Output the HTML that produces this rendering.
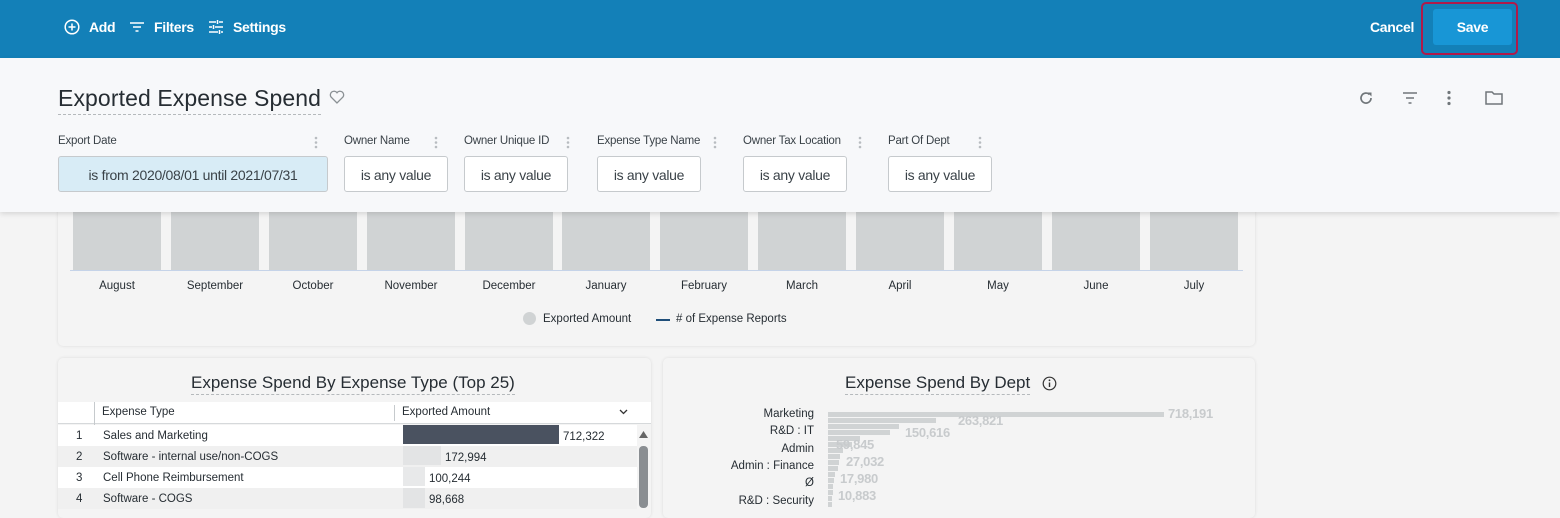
<!DOCTYPE html>
<html><head><style>
*{margin:0;padding:0;box-sizing:border-box}
body{width:1560px;height:508px;overflow:hidden;background:#f4f4f4;font-family:"Liberation Sans",sans-serif;position:relative;color:#262d33}
.abs{position:absolute}
.hdr{left:0;top:0;width:1560px;height:58px;background:#1380b8;color:#fff;font-weight:bold;font-size:14px;letter-spacing:-0.3px}
.panel{left:0;top:58px;width:1560px;height:154px;background:#f7f8fa;box-shadow:0 2px 5px rgba(0,0,0,.12);z-index:2}
.lbl{font-size:11.5px;color:#3a4248;letter-spacing:-0.2px}
.box{top:98px;height:36px;border:1px solid #c6cacd;border-radius:3px;background:#fff;font-size:14px;color:#3a4248;text-align:center;line-height:36px;letter-spacing:-0.3px}
.card{background:#f4f4f4;border-radius:5px;box-shadow:0 0 3px rgba(0,0,0,.1)}
.bar{top:212px;height:58px;background:#d0d3d4;width:88px}
.mon{top:280px;font-size:11.5px;width:98px;text-align:center}
.row{left:58px;width:579px;height:21px;font-size:11.5px;line-height:21px}
.dl{font-size:11.5px;width:150px;text-align:right;left:664px}
.db{left:828px;height:5px;background:#d0d3d4}
.dv{font-size:13px;color:#c8cbcd;font-weight:bold;letter-spacing:-0.3px}
</style></head><body>
<div class="abs hdr">
<svg class="abs" style="left:64px;top:19px" width="16" height="16" viewBox="0 0 16 16"><circle cx="8" cy="8" r="6.8" fill="none" stroke="#fff" stroke-width="1.5"/><path d="M8 4.5v7M4.5 8h7" stroke="#fff" stroke-width="1.5"/></svg>
<span class="abs" style="left:89px;top:19px">Add</span>
<svg class="abs" style="left:129px;top:20px" width="16" height="14" viewBox="0 0 16 14"><path d="M1 3h14M4 7h8M6.5 11h3" stroke="#fff" stroke-width="1.6"/></svg>
<span class="abs" style="left:154px;top:19px">Filters</span>
<svg class="abs" style="left:208px;top:19px" width="16" height="16" viewBox="0 0 16 16"><path d="M1 3h7M11 3h4M1 8h3M7 8h8M1 13h9M13 13h2M9.5 1v4M5.5 6v4M11.5 11v4" stroke="#fff" stroke-width="1.5"/></svg>
<span class="abs" style="left:233px;top:19px">Settings</span>
<span class="abs" style="left:1370px;top:19px">Cancel</span>
<div class="abs" style="left:1421px;top:2px;width:97px;height:53px;border:2px solid #b01a4a;border-radius:5px"></div>
<div class="abs" style="left:1433px;top:9px;width:79px;height:36px;background:#1896d6;border-radius:3px;text-align:center;line-height:36px">Save</div>
</div>
<div class="abs panel">
<div class="abs" style="left:58px;top:27px;font-size:23px;color:#262d33;border-bottom:1px dashed #b5b9bc;padding-bottom:2px;letter-spacing:0.1px">Exported Expense Spend</div>
<svg class="abs" style="left:329px;top:32px" width="16" height="14" viewBox="0 0 16 14"><path d="M8 13L2 7A3.3 3.3 0 0 1 8 2.8 3.3 3.3 0 0 1 14 7z" fill="none" stroke="#8a9094" stroke-width="1.3"/></svg>
<svg class="abs" style="left:1358px;top:32px" width="16" height="16" viewBox="0 0 16 16"><path d="M13 8A5 5 0 1 1 11.5 4.5" fill="none" stroke="#70767a" stroke-width="1.7"/><path d="M9.5 2.5h4v4z" fill="#70767a"/></svg>
<svg class="abs" style="left:1402px;top:33px" width="16" height="14" viewBox="0 0 16 14"><path d="M1 2h14M4 7h8M6.5 12h3" stroke="#70767a" stroke-width="1.6"/></svg>
<svg class="abs" style="left:1446px;top:32px" width="6" height="16" viewBox="0 0 6 16"><circle cx="3" cy="2.5" r="1.6" fill="#70767a"/><circle cx="3" cy="8" r="1.6" fill="#70767a"/><circle cx="3" cy="13.5" r="1.6" fill="#70767a"/></svg>
<svg class="abs" style="left:1485px;top:32px" width="18" height="15" viewBox="0 0 18 15"><path d="M1 2h6l2 2h8v10H1z" fill="none" stroke="#70767a" stroke-width="1.5"/></svg>
<span class="abs lbl" style="left:58px;top:77px">Export Date</span>
<span class="abs lbl" style="left:344px;top:77px">Owner Name</span>
<span class="abs lbl" style="left:464px;top:77px">Owner Unique ID</span>
<span class="abs lbl" style="left:597px;top:77px">Expense Type Name</span>
<span class="abs lbl" style="left:743px;top:77px">Owner Tax Location</span>
<span class="abs lbl" style="left:888px;top:77px">Part Of Dept</span>
<svg class="abs" style="left:314px;top:78px" width="4" height="13"><circle cx="2" cy="2" r="1.3" fill="#b8bcc0"/><circle cx="2" cy="6.5" r="1.3" fill="#b8bcc0"/><circle cx="2" cy="11" r="1.3" fill="#b8bcc0"/></svg>
<svg class="abs" style="left:434px;top:78px" width="4" height="13"><circle cx="2" cy="2" r="1.3" fill="#b8bcc0"/><circle cx="2" cy="6.5" r="1.3" fill="#b8bcc0"/><circle cx="2" cy="11" r="1.3" fill="#b8bcc0"/></svg>
<svg class="abs" style="left:566px;top:78px" width="4" height="13"><circle cx="2" cy="2" r="1.3" fill="#b8bcc0"/><circle cx="2" cy="6.5" r="1.3" fill="#b8bcc0"/><circle cx="2" cy="11" r="1.3" fill="#b8bcc0"/></svg>
<svg class="abs" style="left:713px;top:78px" width="4" height="13"><circle cx="2" cy="2" r="1.3" fill="#b8bcc0"/><circle cx="2" cy="6.5" r="1.3" fill="#b8bcc0"/><circle cx="2" cy="11" r="1.3" fill="#b8bcc0"/></svg>
<svg class="abs" style="left:858px;top:78px" width="4" height="13"><circle cx="2" cy="2" r="1.3" fill="#b8bcc0"/><circle cx="2" cy="6.5" r="1.3" fill="#b8bcc0"/><circle cx="2" cy="11" r="1.3" fill="#b8bcc0"/></svg>
<svg class="abs" style="left:978px;top:78px" width="4" height="13"><circle cx="2" cy="2" r="1.3" fill="#b8bcc0"/><circle cx="2" cy="6.5" r="1.3" fill="#b8bcc0"/><circle cx="2" cy="11" r="1.3" fill="#b8bcc0"/></svg>
<div class="abs box" style="left:58px;width:270px;background:#d8ecf6">is from 2020/08/01 until 2021/07/31</div>
<div class="abs box" style="left:344px;width:104px">is any value</div>
<div class="abs box" style="left:464px;width:104px">is any value</div>
<div class="abs box" style="left:597px;width:104px">is any value</div>
<div class="abs box" style="left:743px;width:104px">is any value</div>
<div class="abs box" style="left:888px;width:104px">is any value</div>
</div>
<div class="abs card" style="left:58px;top:190px;width:1197px;height:156px"></div>
<div class="abs" style="left:70px;top:270px;width:1173px;height:1px;background:#c5d3e8"></div>
<div class="abs bar" style="left:73px"></div><div class="abs bar" style="left:171px"></div><div class="abs bar" style="left:269px"></div><div class="abs bar" style="left:367px"></div><div class="abs bar" style="left:465px"></div><div class="abs bar" style="left:562px"></div><div class="abs bar" style="left:660px"></div><div class="abs bar" style="left:758px"></div><div class="abs bar" style="left:856px"></div><div class="abs bar" style="left:954px"></div><div class="abs bar" style="left:1052px"></div><div class="abs bar" style="left:1150px"></div>
<div class="abs mon" style="left:68px">August</div><div class="abs mon" style="left:166px">September</div><div class="abs mon" style="left:264px">October</div><div class="abs mon" style="left:362px">November</div><div class="abs mon" style="left:460px">December</div><div class="abs mon" style="left:557px">January</div><div class="abs mon" style="left:655px">February</div><div class="abs mon" style="left:753px">March</div><div class="abs mon" style="left:851px">April</div><div class="abs mon" style="left:949px">May</div><div class="abs mon" style="left:1047px">June</div><div class="abs mon" style="left:1145px">July</div>
<div class="abs" style="left:523px;top:312px;width:13px;height:13px;border-radius:50%;background:#d0d3d4"></div>
<span class="abs" style="left:543px;top:313px;font-size:11.5px">Exported Amount</span>
<div class="abs" style="left:656px;top:319px;width:14px;height:2px;background:#1f4e79"></div>
<span class="abs" style="left:676px;top:313px;font-size:11.5px"># of Expense Reports</span>

<div class="abs card" style="left:58px;top:358px;width:593px;height:160px"></div>
<div class="abs" style="left:191px;top:373px;font-size:17px;border-bottom:1px dashed #b5b9bc;padding-bottom:1px">Expense Spend By Expense Type (Top 25)</div>
<div class="abs" style="left:58px;top:402px;width:593px;height:22px;background:#fff;border-bottom:1px solid #d6d9db"></div>
<div class="abs" style="left:94px;top:402px;width:1px;height:106px;background:#c6cacd"></div>
<div class="abs" style="left:394px;top:405px;width:1px;height:16px;background:#c6cacd"></div>
<span class="abs" style="left:102px;top:406px;font-size:11.5px">Expense Type</span>
<span class="abs" style="left:402px;top:406px;font-size:11.5px">Exported Amount</span>
<svg class="abs" style="left:619px;top:409px" width="9" height="6"><path d="M1 1l3.5 3.5L8 1" fill="none" stroke="#333" stroke-width="1.3"/></svg>
<div class="abs row" style="top:425px;background:#fff"></div>
<div class="abs row" style="top:446px;background:#f0f0f0"></div>
<div class="abs row" style="top:467px;background:#fff"></div>
<div class="abs row" style="top:488px;background:#f0f0f0"></div>
<span class="abs" style="left:76px;top:430px;font-size:11.5px">1</span><span class="abs" style="left:103px;top:430px;font-size:11.5px">Sales and Marketing</span>
<span class="abs" style="left:76px;top:451px;font-size:11.5px">2</span><span class="abs" style="left:103px;top:451px;font-size:11.5px">Software - internal use/non-COGS</span>
<span class="abs" style="left:76px;top:472px;font-size:11.5px">3</span><span class="abs" style="left:103px;top:472px;font-size:11.5px">Cell Phone Reimbursement</span>
<span class="abs" style="left:76px;top:493px;font-size:11.5px">4</span><span class="abs" style="left:103px;top:493px;font-size:11.5px">Software - COGS</span>
<div class="abs" style="left:403px;top:425px;width:156px;height:19px;background:#4a5260"></div>
<span class="abs" style="left:563px;top:431px;font-size:11.5px">712,322</span>
<div class="abs" style="left:403px;top:446px;width:38px;height:19px;background:#e3e4e5"></div>
<span class="abs" style="left:445px;top:452px;font-size:11.5px">172,994</span>
<div class="abs" style="left:403px;top:467px;width:22px;height:19px;background:#e8e9ea"></div>
<span class="abs" style="left:429px;top:473px;font-size:11.5px">100,244</span>
<div class="abs" style="left:403px;top:488px;width:22px;height:20px;background:#e3e4e5"></div>
<span class="abs" style="left:429px;top:494px;font-size:11.5px">98,668</span>
<svg class="abs" style="left:639px;top:431px" width="9" height="7"><path d="M0 7L4.5 0 9 7z" fill="#666"/></svg>
<div class="abs" style="left:639px;top:446px;width:9px;height:62px;background:#8a8e92;border-radius:4px"></div>

<div class="abs card" style="left:663px;top:358px;width:592px;height:160px"></div>
<div class="abs" style="left:845px;top:373px;font-size:17px;border-bottom:1px dashed #b5b9bc;padding-bottom:1px">Expense Spend By Dept</div>
<svg class="abs" style="left:1042px;top:376px" width="15" height="15" viewBox="0 0 15 15"><circle cx="7.5" cy="7.5" r="6.3" fill="none" stroke="#333" stroke-width="1.2"/><path d="M7.5 6.5v4.5" stroke="#333" stroke-width="1.4"/><circle cx="7.5" cy="4.3" r=".9" fill="#333"/></svg>
<div class="abs dl" style="top:408px">Marketing</div>
<div class="abs dl" style="top:425px">R&amp;D : IT</div>
<div class="abs dl" style="top:443px">Admin</div>
<div class="abs dl" style="top:460px">Admin : Finance</div>
<div class="abs dl" style="top:477px">Ø</div>
<div class="abs dl" style="top:495px">R&amp;D : Security</div>
<div class="abs db" style="top:412px;width:336px"></div>
<div class="abs db" style="top:418px;width:108px"></div>
<div class="abs db" style="top:424px;width:71px"></div>
<div class="abs db" style="top:430px;width:62px"></div>
<div class="abs db" style="top:436px;width:32px"></div>
<div class="abs db" style="top:442px;width:24px"></div>
<div class="abs db" style="top:448px;width:15px"></div>
<div class="abs db" style="top:454px;width:12px"></div>
<div class="abs db" style="top:460px;width:11px"></div>
<div class="abs db" style="top:466px;width:10px"></div>
<div class="abs db" style="top:472px;width:7px"></div>
<div class="abs db" style="top:478px;width:6px"></div>
<div class="abs db" style="top:484px;width:5px"></div>
<div class="abs db" style="top:490px;width:5px"></div>
<div class="abs db" style="top:496px;width:4px"></div>
<div class="abs db" style="top:502px;width:4px"></div>
<span class="abs dv" style="left:1168px;top:406px">718,191</span>
<span class="abs dv" style="left:958px;top:413px">263,821</span>
<span class="abs dv" style="left:905px;top:425px">150,616</span>
<span class="abs dv" style="left:836px;top:437px">59,845</span>
<span class="abs dv" style="left:846px;top:454px">27,032</span>
<span class="abs dv" style="left:840px;top:471px">17,980</span>
<span class="abs dv" style="left:838px;top:488px">10,883</span>
</body></html>
